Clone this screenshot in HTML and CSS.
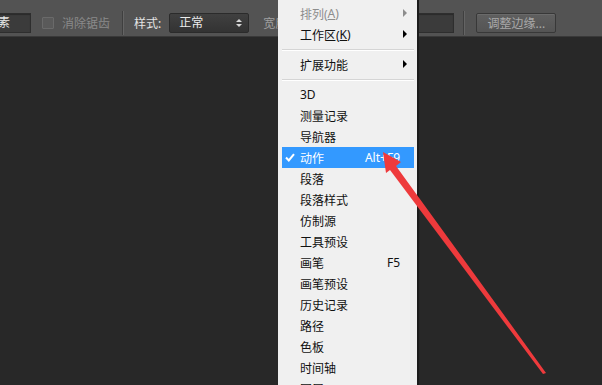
FILE: index.html
```html
<!DOCTYPE html>
<html lang="zh-CN">
<head>
    <meta charset="UTF-8">
    <title>窗口菜单</title>
    <link rel="stylesheet" href="styles.css">
</head>
<body>
    <div class="screen">
        <div class="toolbar">
            <div class="field field-feather">像素</div>
            <label class="check"><span class="box"></span>消除锯齿</label>
            <span class="sep"></span>
            <span class="label">样式:</span>
            <div class="select">正常<span class="updown"></span></div>
            <span class="label dim">宽度:</span>
            <div class="field field-width"></div>
            <span class="sep sep-right"></span>
            <button class="btn">调整边缘...</button>
        </div>
        <div class="canvas"></div>

        <ul class="menu">
            <li class="sub disabled">排列(<u>A</u>)</li>
            <li class="sub">工作区(<u>K</u>)</li>
            <li class="divider"></li>
            <li class="sub">扩展功能</li>
            <li class="divider"></li>
            <li>3D</li>
            <li>测量记录</li>
            <li>导航器</li>
            <li class="active">
                <svg class="tick" width="10" height="9" viewBox="0 0 10 9"><path d="M1 4.5 L3.8 7.5 L9 1.2" fill="none" stroke="#fff" stroke-width="2"/></svg>
                动作<span class="key">Alt+F9</span>
            </li>
            <li>段落</li>
            <li>段落样式</li>
            <li>仿制源</li>
            <li>工具预设</li>
            <li>画笔<span class="key">F5</span></li>
            <li>画笔预设</li>
            <li>历史记录</li>
            <li>路径</li>
            <li>色板</li>
            <li>时间轴</li>
            <li>图层</li>
        </ul>

        <svg class="pointer" width="602" height="385" viewBox="0 0 602 385">
            <polygon points="383,152 401,162 396,166 546,373 543,374 390,170 386,173" fill="#ee3a3c"/>
        </svg>
    </div>
</body>
</html>
```

FILE: styles.css
```css
* {
    margin: 0;
    padding: 0;
    box-sizing: border-box;
}

body {
    background: #282828;
    font-family: "Noto Sans", "Noto Sans CJK SC", sans-serif;
    font-size: 12px;
}

.screen {
    position: relative;
    width: 602px;
    height: 385px;
    overflow: hidden;
    background: #282828;
}

/* options bar */
.toolbar {
    display: flex;
    align-items: center;
    height: 37px;
    padding-top: 9px;
    background: #535353;
    border-bottom: 1px solid #393939;
    color: #e4e4e4;
    white-space: nowrap;
}

.field {
    height: 20px;
    background: #3b3b3b;
    border: 1px solid #2e2e2e;
    box-shadow: inset 0 1px 1px rgba(0, 0, 0, 0.3);
    line-height: 18px;
    color: #e8e8e8;
}

.field-feather {
    width: 51px;
    margin-left: -20px;
    padding-left: 5px;
}

.field-width {
    width: 38px;
    margin-left: 126px;
}

.check {
    display: flex;
    align-items: center;
    margin-left: 11px;
    color: #8a8a8a;
}

.check .box {
    width: 12px;
    height: 12px;
    margin-right: 8px;
    background: #5a5a5a;
    border: 1px solid #6a6a6a;
    border-radius: 1px;
}

.sep {
    width: 2px;
    height: 24px;
    margin-left: 12px;
    border-left: 1px solid #3f3f3f;
    border-right: 1px solid #646464;
}

.sep-right {
    margin-left: 9px;
}

.label {
    margin-left: 10px;
}

.label.dim {
    margin-left: 14px;
    color: #a0a0a0;
}

.select {
    position: relative;
    width: 80px;
    height: 20px;
    margin-left: 8px;
    padding-left: 9px;
    line-height: 18px;
    background: linear-gradient(#404040, #333);
    border: 1px solid #2b2b2b;
    border-radius: 2px;
    color: #ececec;
}

.updown {
    position: absolute;
    right: 6px;
    top: 5px;
    width: 0;
    height: 0;
    border-left: 3px solid transparent;
    border-right: 3px solid transparent;
    border-bottom: 3px solid #d8d8d8;
}

.updown::after {
    content: "";
    position: absolute;
    left: -3px;
    top: 5px;
    border-left: 3px solid transparent;
    border-right: 3px solid transparent;
    border-top: 3px solid #d8d8d8;
}

.btn {
    height: 20px;
    margin-left: 11px;
    padding: 0 10px;
    font: inherit;
    color: #a9a9a9;
    background: linear-gradient(#5f5f5f, #545454);
    border: 1px solid #383838;
    border-radius: 2px;
    box-shadow: inset 0 1px 0 #6a6a6a;
}

/* dropdown */
.menu {
    position: absolute;
    left: 278px;
    top: 0;
    width: 139px;
    padding: 3px 3px 0 4px;
    list-style: none;
    background: #f0f0f0;
    box-shadow: 2px 0 0 #1c1c1c;
    color: #111;
}

.menu li {
    position: relative;
    display: flex;
    align-items: center;
    height: 21px;
    padding: 0 14px 0 18px;
}

.menu li.disabled {
    color: #8d8d8d;
}

.menu li.sub::after {
    content: "";
    position: absolute;
    right: 7px;
    top: 6px;
    border-top: 4px solid transparent;
    border-bottom: 4px solid transparent;
    border-left: 4px solid #000;
}

.menu li.disabled::after {
    border-left-color: #8d8d8d;
}

.menu li.divider {
    height: 9px;
    padding: 0;
}

.menu li.divider::before {
    content: "";
    position: absolute;
    left: 0;
    right: 0;
    top: 4px;
    border-top: 1px solid #d5d5d5;
    border-bottom: 1px solid #fff;
}

.menu li.active {
    background: #3399ff;
    color: #fff;
}

.menu .tick {
    position: absolute;
    left: 3px;
    top: 6px;
}

.menu .key {
    margin-left: auto;
}

.pointer {
    position: absolute;
    left: 0;
    top: 0;
    pointer-events: none;
}
```
